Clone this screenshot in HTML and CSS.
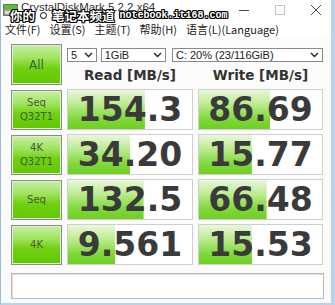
FILE: index.html
```html
<!DOCTYPE html>
<html lang="zh-CN">
<head>
	<meta charset="utf-8" />
	<title>CrystalDiskMark 5.2.2 x64</title>
	<link rel="stylesheet" href="styles.css">
</head>
<body>
	<div class="window">
		<div class="titlebar">
			<svg class="appicon" width="15" height="14" viewBox="0 0 15 14">
				<rect x="0.5" y="1.5" width="14" height="11" fill="#9aa39a" stroke="#6c746c" />
				<rect x="1" y="2" width="13" height="4" fill="#58c030" />
				<rect x="2" y="8" width="11" height="3" fill="#d8dcd8" />
			</svg>
			<span class="title">CrystalDiskMark 5.2.2 x64</span>
			<div class="controls">
				<svg width="12" height="12" viewBox="0 0 12 12"><line x1="1" y1="6.5" x2="11" y2="6.5" stroke="#444" /></svg>
				<svg width="12" height="12" viewBox="0 0 12 12"><rect x="1.5" y="1.5" width="9" height="9" fill="none" stroke="#c4c4c4" /></svg>
				<svg width="12" height="12" viewBox="0 0 12 12"><path d="M1 1 L11 11 M11 1 L1 11" stroke="#444" /></svg>
			</div>
			<div class="watermark"><span class="cn">你的</span><span class="dot"></span><span class="cn">笔记本频道</span><span class="url">notebook.it168.com</span></div>
		</div>
		<div class="menu">
			<span>文件(F)</span>
			<span>设置(S)</span>
			<span>主题(T)</span>
			<span>帮助(H)</span>
			<span>语言(L)(Language)</span>
		</div>
		<div class="panel">
			<div class="grid">
				<div class="btn all">All</div>
				<div class="top">
					<div class="selects">
						<div class="select s-count"><span>5</span><svg width="9" height="6" viewBox="0 0 9 6"><path d="M1 1 L4.5 4.5 L8 1" fill="none" stroke="#222" stroke-width="1.4" /></svg></div>
						<div class="select s-size"><span>1GiB</span><svg width="9" height="6" viewBox="0 0 9 6"><path d="M1 1 L4.5 4.5 L8 1" fill="none" stroke="#222" stroke-width="1.4" /></svg></div>
						<div class="select s-drive"><span>C: 20% (23/116GiB)</span><svg width="9" height="6" viewBox="0 0 9 6"><path d="M1 1 L4.5 4.5 L8 1" fill="none" stroke="#222" stroke-width="1.4" /></svg></div>
					</div>
					<div class="heads">
						<div>Read [MB/s]</div>
						<div>Write [MB/s]</div>
					</div>
				</div>

				<div class="btn label">Seq<br>Q32T1</div>
				<div class="value" style="background-size: 62% 100%;">154.3</div>
				<div class="value" style="background-size: 58% 100%;">86.69</div>

				<div class="btn label">4K<br>Q32T1</div>
				<div class="value" style="background-size: 50% 100%;">34.20</div>
				<div class="value" style="background-size: 43% 100%;">15.77</div>

				<div class="btn label">Seq</div>
				<div class="value" style="background-size: 61% 100%;">132.5</div>
				<div class="value" style="background-size: 55% 100%;">66.48</div>

				<div class="btn label">4K</div>
				<div class="value" style="background-size: 38% 100%;">9.561</div>
				<div class="value" style="background-size: 43% 100%;">15.53</div>
			</div>
			<div class="comment"></div>
		</div>
	</div>
</body>
</html>
```

FILE: styles.css
```css
body
{
	margin: 0;
	background-color: #ffffff;
	font-family: "DejaVu Sans", sans-serif;
}

.window
{
	width: 335px;
	height: 305px;
	box-sizing: border-box;
	border-left: 1px solid #9fbad4;
	border-right: 4px solid #b9d2ea;
	border-bottom: 2px solid #b9d2ea;
	background-color: #fbfbfb;
}

	.titlebar
	{
		position: relative;
		height: 20px;
		display: flex;
		align-items: flex-start;
		background-color: #ffffff;
	}

	.appicon
	{
		margin: 3px 0 0 2px;
	}

	.title
	{
		margin: 1px 0 0 3px;
		font-family: "Liberation Sans", sans-serif;
		font-size: 11.5px;
		color: #333333;
	}

	.controls
	{
		margin: 4px 0 0 auto;
		display: flex;
		gap: 24px;
		padding-right: 9px;
	}

		.controls svg:first-child
		{
			margin-top: 0;
		}

	.watermark
	{
		position: absolute;
		left: 9px;
		top: 8px;
		display: flex;
		align-items: center;
		color: #ffffff;
		font-weight: bold;
		text-shadow: 1px 0 0 #000, -1px 0 0 #000, 0 1px 0 #000, 0 -1px 0 #000, 1px 1px 0 #000, -1px -1px 0 #000, 1px -1px 0 #000, -1px 1px 0 #000;
	}

		.watermark .cn
		{
			font-family: "Noto Sans CJK SC", sans-serif;
			font-size: 12.5px;
			line-height: 15px;
		}

		.watermark .dot
		{
			width: 5px;
			height: 5px;
			margin: 0 5px;
			border-radius: 50%;
			background-color: #ffffff;
			border: 1px solid #000000;
		}

		.watermark .url
		{
			margin-left: 5px;
			font-family: "Liberation Mono", monospace;
			font-size: 10px;
		}

.menu
{
	height: 17px;
	display: flex;
	gap: 9px;
	padding-left: 4px;
	align-items: center;
	background-color: #ffffff;
	font-family: "Noto Sans CJK SC", sans-serif;
	font-size: 11px;
	color: #222222;
}

.panel
{
	padding: 7px 0 0 10px;
}

.grid
{
	display: grid;
	grid-template-columns: 51px 126px 125px;
	grid-auto-rows: 41px;
	column-gap: 5px;
	row-gap: 4px;
}

.btn
{
	box-sizing: border-box;
	border: 1px solid #8c8c8c;
	box-shadow: inset 0 0 0 1px #d9f3c2;
	background: linear-gradient(to bottom, #c8f0a6 0%, #9ee25a 35%, #6fd012 60%, #62c800 100%);
	display: flex;
	align-items: center;
	justify-content: center;
	text-align: center;
	color: #3f5f2f;
}

	.btn.all
	{
		font-size: 12px;
	}

	.btn.label
	{
		margin-top: 1px;
		font-size: 10px;
		line-height: 14px;
	}

.top
{
	grid-column: 2 / 4;
	padding-top: 4px;
}

	.selects
	{
		display: flex;
		height: 14px;
	}

	.select
	{
		box-sizing: border-box;
		height: 14px;
		border: 1px solid #8a8a8a;
		background-color: #ffffff;
		display: flex;
		align-items: center;
		justify-content: space-between;
		padding: 0 3px 0 3px;
		font-family: "Liberation Sans", sans-serif;
		font-size: 11px;
		color: #222222;
	}

		.select.s-count
		{
			width: 30px;
		}

		.select.s-size
		{
			width: 66px;
			margin-left: 4px;
		}

		.select.s-drive
		{
			width: 153px;
			margin-left: 6px;
		}

	.heads
	{
		display: grid;
		grid-template-columns: 126px 125px;
		column-gap: 5px;
		margin-top: 3px;
		height: 20px;
		align-items: center;
		text-align: center;
		font-weight: bold;
		font-size: 13.5px;
		color: #333333;
	}

.value
{
	box-sizing: border-box;
	border: 1px solid #cfcfcf;
	background-color: #ffffff;
	background-image: linear-gradient(to bottom, #eaf8dc 0%, #b6ea86 40%, #7ed838 75%, #6ed020 100%);
	background-repeat: no-repeat;
	display: flex;
	align-items: center;
	justify-content: center;
	font-weight: bold;
	font-size: 33px;
	color: #3a3a3a;
}

.comment
{
	box-sizing: border-box;
	width: 313px;
	height: 26px;
	margin-top: 8px;
	border: 1px solid #b8b8b8;
	box-shadow: inset 1px 1px 0 #e0e0e0;
	background-color: #ffffff;
}
```
